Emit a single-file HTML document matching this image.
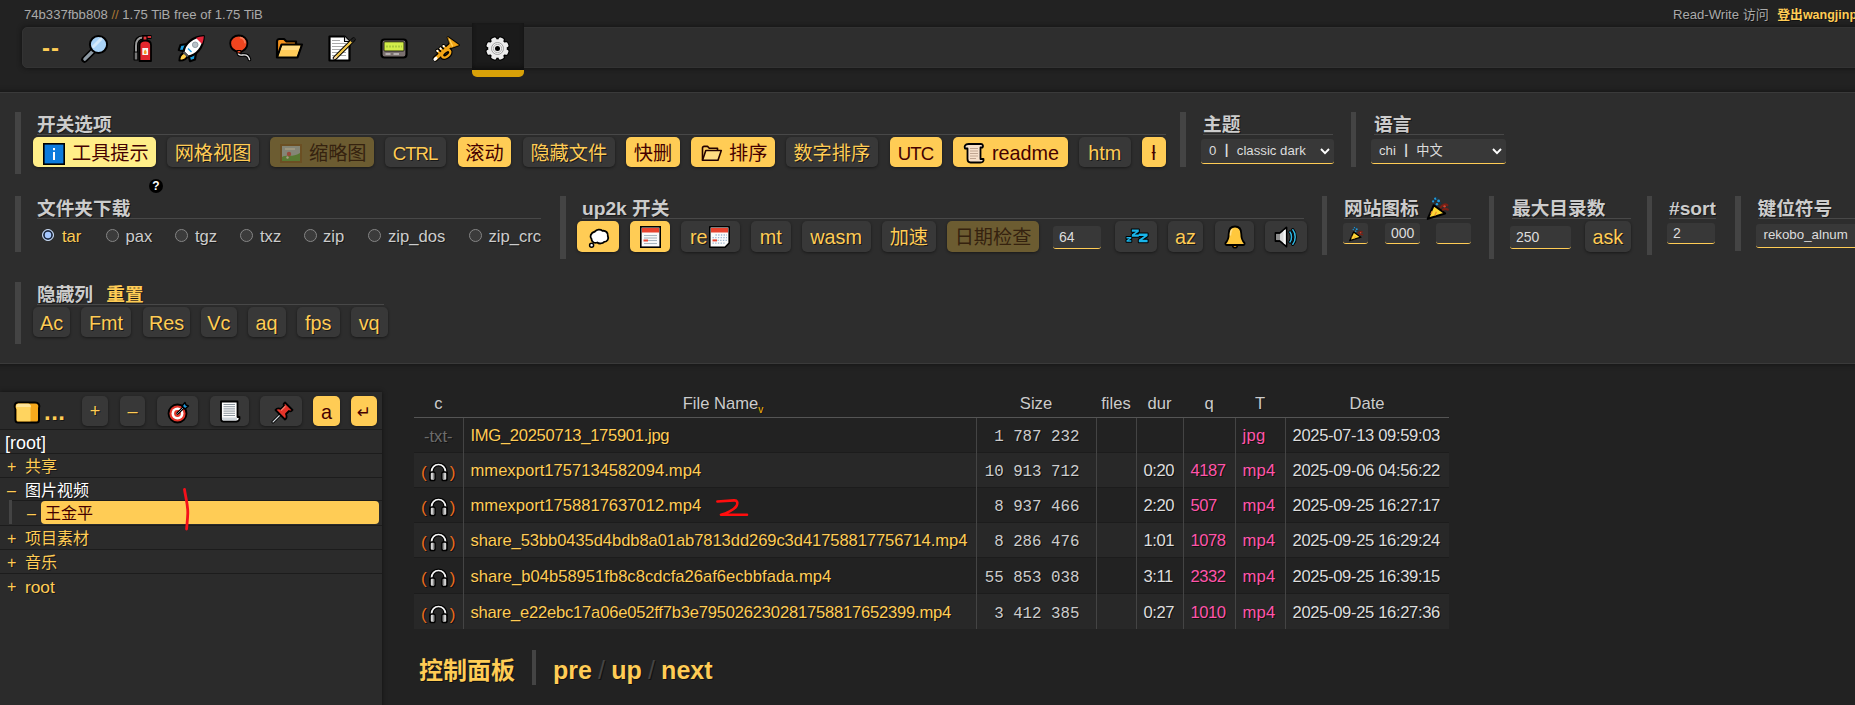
<!DOCTYPE html>
<html lang="zh">
<head>
<meta charset="utf-8">
<title>copyparty</title>
<style>
html,body{margin:0;padding:0}
body{width:1855px;height:705px;overflow:hidden;position:relative;background:#222;color:#ccc;
 font-family:"Liberation Sans","Noto Sans CJK SC",sans-serif;font-size:16px}
.abs,.b,.sec,.h3,.inp,.sel,.rad,.rl,.ico{position:absolute}
a{color:#fc5;text-decoration:none}
/* top */
#srv{left:24px;top:7px;font-size:13.1px;color:#aaa;white-space:nowrap;line-height:16px}
#srv span{color:#a73}
#acc{left:1673px;top:6px;font-size:13.1px;color:#aaa;white-space:nowrap;line-height:17px;text-shadow:1px 1px 0 #111}
#acc .cj{font-size:13px}
#acc a{margin-left:7px;font-weight:normal}
#ops{left:22px;top:27px;width:1900px;height:41px;background:#2e2e2e;border:1px solid #333;border-radius:5px 0 0 5px;box-shadow:0 0 5px #111;box-sizing:border-box}
#gear{left:472px;top:23px;width:52px;height:47px;background:#1b1b1b;border-bottom:7px solid #d8a108;border-radius:0 0 5px 5px;box-shadow:0 -3px 4px #111 inset}
#dash{left:42px;top:36px;font-size:24px;line-height:24px;color:#fc5;font-weight:bold;letter-spacing:1px}
/* config panel */
#cfg{left:-5px;top:92px;width:1900px;height:270px;background:#2d2d2d;border:1px solid #3a3a3a;box-shadow:0 0 5px #111}
.sec{width:5.6px;background:#444;margin-left:-0.8px}
.h3{font-weight:bold;font-size:18.7px;line-height:22px;height:20.3px;margin-top:1.7px;color:#ccc;white-space:nowrap;text-shadow:1px 1px 0 #181818;border-bottom:1px solid #484848}
.h3 .la{font-size:19.2px}
.b{height:30px;line-height:33.5px;border-radius:5px;background:#383838;color:#fc5;text-align:center;font-size:19.2px;white-space:nowrap;
 box-shadow:0 1px 3px rgba(0,0,0,.45);text-shadow:1px 1px 0 #181818}
.b.on{background:#fc5;color:#400;text-shadow:none}
.b.hov{background:#fe8}
.b.on.dim{background:#6c5c31;color:#35220f}.b.dim svg{opacity:.4}
.b .la{font-size:19.8px}
.inp{background:#383838;border-bottom:1px solid #fc5;border-radius:3px;color:#ddd;font-size:14px;box-sizing:border-box;padding-left:6px;white-space:nowrap;overflow:hidden}
.rad{width:11.400px;height:11.400px;border-radius:50%;border:1px solid #858585;background:#3b3b3b;margin-top:-0.700px}
.rad.on{border:1.500px solid #c9d9f0;width:10.400px;height:10.400px;background:#a6c8ff;box-shadow:inset 0 0 0 1.800px #1d2940}
.rl{font-size:16.6px;line-height:20px;margin-top:1px;color:#ccc;text-shadow:1px 1px 0 #181818;white-space:nowrap}
/* tree */
#tree{left:0;top:392px;width:382px;height:320px;background:#2b2b2b;box-shadow:0 0 4px #111}
.tl{position:absolute;left:0;width:382px;height:1px;background:#1c1c1c}
.ti{position:absolute;font-size:16px;line-height:22px;margin-top:1px;white-space:nowrap;color:#fc5;text-shadow:1px 1px 0 #181818}
/* files */
#files{position:absolute;left:414px;top:392px;width:1035px;border-collapse:collapse;table-layout:fixed;font-size:16.6px}
#files th{height:25px;padding:0 0 1px 0;box-sizing:border-box;font-weight:normal;color:#ccc;border-bottom:1px solid #555;text-align:center;vertical-align:middle;text-shadow:1px 1px 0 #181818}
#files td{height:35px;padding:3px 0 0 7px;box-sizing:border-box;border-left:1px solid #444;border-top:1px solid #1c1c1c;white-space:nowrap;overflow:hidden;color:#ddd;text-shadow:1px 1px 0 #111}
#files td:first-child{border-left:none;padding:6px 0 0 0;text-align:center}
#files tr:nth-child(even) td{background:#282828}
#files tr.h36 td{height:36px}
#files td a{color:#fc5}
#files td.sz{font-family:"Liberation Mono",monospace;font-size:15.8px;text-align:right;padding:5px 16px 0 0;color:#ccc}
#files td.pk{color:#f5a}
#files td.du{letter-spacing:-0.45px}#files td.q{letter-spacing:-0.48px}#files td.t{letter-spacing:0.25px}#files td.dt{letter-spacing:-0.347px}
.par{color:#e96d1f;font-size:17px}
#foot{left:419px;top:652.5px;height:36px;line-height:36px;font-weight:bold;white-space:nowrap;color:#fc5;text-shadow:1px 1px 0 #111}
</style>
</head>
<body>
<div id="srv" class="abs">74b337fbb808 <span>//</span> 1.75 TiB free of 1.75 TiB</div>
<div id="acc" class="abs">Read-Write <span class="cj">访问</span> <a style="font-weight:bold;margin-left:5px"><span class="cj" style="font-size:12.8px">登出</span><span style="font-size:12.5px">wangjinping</span></a></div>
<div id="ops" class="abs"></div>
<div id="gear" class="abs"></div>
<div id="dash" class="abs">--</div>
<!-- magnifier -->
<svg class="ico" style="left:80px;top:34px" width="29" height="29" viewBox="0 0 29 29"><path d="M13 17 L4.5 25.5" stroke="#000" stroke-width="6.5" stroke-linecap="round"/><path d="M13 17 L4.8 25.2" stroke="#8d99a3" stroke-width="3.2" stroke-linecap="round"/><circle cx="18.5" cy="10.5" r="8.6" fill="#a9d3f7" stroke="#000" stroke-width="2"/><path d="M13.5 12.5 L21 5" stroke="#d3e9fb" stroke-width="3" stroke-linecap="round"/></svg>
<!-- extinguisher -->
<svg class="ico" style="left:132px;top:34px" width="22" height="29" viewBox="0 0 22 29"><path d="M4 26 V12 C4 6 7 3.5 11 3.5" fill="none" stroke="#000" stroke-width="4.5"/><path d="M4 26 V12 C4 6 7 3.5 11 3.5" fill="none" stroke="#9a9a9a" stroke-width="2"/><rect x="2.2" y="18" width="3.6" height="8" fill="#777" stroke="#000" stroke-width="1"/><path d="M10 3 H19.5" stroke="#000" stroke-width="4"/><path d="M10.5 3 H19" stroke="#e8353b" stroke-width="1.8"/><rect x="11" y="2" width="4" height="5" fill="#e8353b" stroke="#000" stroke-width="1.2"/><path d="M7.5 27 V11 C7.5 8 9.5 6.5 13.2 6.5 C17 6.5 19 8 19 11 V27 Z" fill="#e3262e" stroke="#000" stroke-width="1.8" stroke-linejoin="round"/><rect x="10.3" y="14" width="5.8" height="7" fill="#f4f4f4"/><path d="M13.2 15.5 c1.5 1.5 1.8 3 0.9 4.5 h-1.8 c-0.9-1.5-0.6-3 0.9-4.5z" fill="#f59a23"/></svg>
<!-- rocket -->
<svg class="ico" style="left:177px;top:34px" width="29" height="29" viewBox="0 0 29 29"><g stroke="#000" stroke-width="2.200" stroke-linejoin="round"><path d="M2.500 26.500 C2.500 22 4.500 19.500 8 18.500 L11 21.500 C10 25 7.500 26.500 2.500 26.500Z" fill="#f7931e"/><path d="M10.500 10 L3.500 11 L1.800 16 L8.500 17.500Z" fill="#1ba1e2"/><path d="M19 18.500 L18 25.500 L13 27.200 L11.500 20.500Z" fill="#1ba1e2"/><path d="M6.500 18 C7.500 9.500 15.500 2.500 26.800 2.200 C26.500 13.500 19.500 21.500 11 22.500Z" fill="#fff"/></g><path d="M19 4 C21.500 2.900 24.500 2.300 26.800 2.200 C26.700 4.500 26.200 7.500 25 10Z" fill="#e3263a"/><path d="M3.500 25.600 C3.700 22.500 5.200 20.800 7.500 20 L9.300 21.800 C8.300 24 6.500 25.400 3.500 25.600Z" fill="#ffd34e"/><circle cx="18.200" cy="10.800" r="2.800" fill="#b9c2c8" stroke="#8d979e" stroke-width="0.900"/><path d="M6.500 18 L11 22.500" stroke="#555" stroke-width="2.200"/><path d="M11 14.500 L14.500 18" stroke="#1ba1e2" stroke-width="1.400"/></svg>
<!-- balloon -->
<svg class="ico" style="left:228px;top:34px" width="25" height="29" viewBox="0 0 25 29"><path d="M11 17.500 C9.500 20.500 11.500 21.500 14.500 21 C18 20.400 20.500 21.500 21.500 25.500" fill="none" stroke="#000" stroke-width="3.600" stroke-linecap="round"/><path d="M11 17.500 C9.500 20.500 11.500 21.500 14.500 21 C18 20.400 20.500 21.500 21.500 25.500" fill="none" stroke="#e8e8e8" stroke-width="1.400" stroke-linecap="round"/><path d="M11 18.200 C5.500 17 2.200 13.500 2.200 9.300 C2.200 4.800 6 1.500 10.800 1.500 C15.600 1.500 19.400 4.800 19.400 9.300 C19.400 13.500 16.400 17 11 18.200Z" fill="#f0451f" stroke="#000" stroke-width="1.800"/><path d="M9.300 16.500 L12.700 16.500 L13.200 19 L8.800 19Z" fill="#f0451f" stroke="#000" stroke-width="1.200" stroke-linejoin="round"/><path d="M12.500 3.600 C15 4.200 16.800 6.200 17 8.800" fill="none" stroke="#f77e5b" stroke-width="1.600" stroke-linecap="round"/></svg>
<!-- open folder -->
<svg class="ico" style="left:275px;top:37px" width="29" height="23" viewBox="0 0 29 23"><path d="M2 20.500 V4.500 C2 3 3 2 4.500 2 H9 L11.500 4.500 H21 V8" fill="#f7941d" stroke="#000" stroke-width="2.200" stroke-linejoin="round"/><path d="M2 20.500 L6.500 7.500 H27 L22.500 20.500Z" fill="#ffd262" stroke="#000" stroke-width="2.200" stroke-linejoin="round"/><path d="M7.500 9 H25 L21.500 19 H4Z" fill="#ffcc5a"/><path d="M7.500 9 H25 L23.500 13 H6Z" fill="#ffdc85"/></svg>
<!-- memo -->
<svg class="ico" style="left:327px;top:34px" width="30" height="29" viewBox="0 0 30 29"><path d="M2.500 2.500 H17.500 L22.500 7.500 V26.500 H2.500Z" fill="#fff" stroke="#000" stroke-width="2.200" stroke-linejoin="round"/><path d="M17.500 2.500 V7.500 H22.500" fill="#d9d9d9" stroke="#000" stroke-width="1.100" stroke-linejoin="round"/><g stroke="#a9a9a9" stroke-width="1"><path d="M5 6.500 H13"/><path d="M5 9.500 H19"/><path d="M5 12.500 H19"/><path d="M5 15.500 H19"/><path d="M5 18.500 H19"/><path d="M5 21.500 H19"/><path d="M5 24 H10"/></g><path d="M8 24 L26.500 5.500" stroke="#000" stroke-width="4.200" stroke-linecap="round"/><path d="M8.500 23.500 L25 7" stroke="#f4c84a" stroke-width="2.300" stroke-linecap="round"/><path d="M25 7 L26.800 5.200" stroke="#222" stroke-width="2.600" stroke-linecap="round"/><path d="M7.600 24.400 L9.300 22.700" stroke="#f2d5a8" stroke-width="1.800" stroke-linecap="round"/></svg>
<!-- pager -->
<svg class="ico" style="left:380px;top:38px" width="28" height="21" viewBox="0 0 28 21"><rect x="1.500" y="1.500" width="25" height="18" rx="3" fill="#7a706f" stroke="#000" stroke-width="2.200"/><rect x="4" y="3.800" width="20" height="9.200" rx="0.800" fill="#d2ec4a" stroke="#000" stroke-width="0.800"/><path d="M6 8.500 H22" stroke="#a9c83c" stroke-width="2" stroke-dasharray="2 1"/><path d="M5.500 16 H10.500 M13.500 16 H19" stroke="#c9c5c5" stroke-width="1.600"/></svg>
<!-- trumpet -->
<svg class="ico" style="left:431px;top:34px" width="29" height="29" viewBox="0 0 29 29"><g stroke="#000" stroke-linecap="round" stroke-linejoin="round" fill="none"><path d="M4.500 24.700 L20 11" stroke-width="5.800"/><path d="M17 3.500 L27.500 11 L20.500 13.500 Z" fill="#000" stroke-width="2.600"/><ellipse cx="15.200" cy="19.800" rx="4.800" ry="2.800" transform="rotate(-40 15.200 19.800)" stroke-width="4.800"/><path d="M8.800 19.500 L6.300 16.700 M11.800 17 L9.400 14.400 M14.800 14.600 L12.500 12" stroke-width="4"/></g><g stroke="#f2a516" stroke-linecap="round" stroke-linejoin="round" fill="none"><path d="M4.500 24.700 L20 11" stroke-width="3.300"/><path d="M17 3.500 L27.500 11 L20.500 13.500 Z" fill="#f2a516" stroke-width="0.600"/><ellipse cx="15.200" cy="19.800" rx="4.800" ry="2.800" transform="rotate(-40 15.200 19.800)" stroke-width="2.400"/><path d="M8.800 19.500 L6.300 16.700 M11.800 17 L9.400 14.400 M14.800 14.600 L12.500 12" stroke-width="1.900"/></g><path d="M18.500 5.500 L21.500 12" stroke="#ffd05a" stroke-width="1.400" stroke-linecap="round"/><path d="M6.300 16.700 l0.300 0.300 M9.400 14.400 l0.300 0.300 M12.500 12 l0.300 0.300" stroke="#fff" stroke-width="2" stroke-linecap="round"/><path d="M3.800 25.400 L5.200 24.100" stroke="#fff" stroke-width="2.800" stroke-linecap="round"/></svg>
<!-- gear -->
<svg class="ico" style="left:484px;top:35px" width="27" height="27" viewBox="-13.500 -13.500 27 27"><g fill="#000" stroke="#000" stroke-width="2.200"><circle r="9.300"/><rect x="-2.600" y="-11.300" width="5.200" height="22.600" rx="1.400" transform="rotate(22.5)"/><rect x="-2.600" y="-11.300" width="5.200" height="22.600" rx="1.400" transform="rotate(67.5)"/><rect x="-2.600" y="-11.300" width="5.200" height="22.600" rx="1.400" transform="rotate(112.5)"/><rect x="-2.600" y="-11.300" width="5.200" height="22.600" rx="1.400" transform="rotate(157.5)"/></g><g fill="#ececec"><circle r="9.300"/><rect x="-2.600" y="-11.300" width="5.200" height="22.600" rx="1.400" transform="rotate(22.5)"/><rect x="-2.600" y="-11.300" width="5.200" height="22.600" rx="1.400" transform="rotate(67.5)"/><rect x="-2.600" y="-11.300" width="5.200" height="22.600" rx="1.400" transform="rotate(112.5)"/><rect x="-2.600" y="-11.300" width="5.200" height="22.600" rx="1.400" transform="rotate(157.5)"/></g><circle r="6" fill="#f2f2f2" stroke="#8c8c8c" stroke-width="0.800"/><circle r="4.200" fill="#ececec" stroke="#9a9a9a" stroke-width="0.700"/><circle r="2.500" fill="#000"/></svg>

<div id="cfg" class="abs"></div>
<!-- section bars -->
<div class="sec" style="left:16px;top:112px;height:62px"></div>
<div class="sec" style="left:1181px;top:112px;height:55px"></div>
<div class="sec" style="left:1351.5px;top:112px;height:55px"></div>
<div class="sec" style="left:16px;top:196px;height:56px"></div>
<div class="sec" style="left:561px;top:196px;height:63px"></div>
<div class="sec" style="left:1322.5px;top:196px;height:59px"></div>
<div class="sec" style="left:1489.5px;top:196px;height:63px"></div>
<div class="sec" style="left:1647.5px;top:196px;height:59px"></div>
<div class="sec" style="left:1736px;top:196px;height:55px"></div>
<div class="sec" style="left:16px;top:282px;height:62px"></div>
<!-- headings -->
<div class="h3" style="left:37px;top:112px;width:1129px">开关选项</div>
<div class="h3" style="left:1203px;top:112px;width:130px">主题</div>
<div class="h3" style="left:1374px;top:112px;width:130px">语言</div>
<div class="h3" style="left:37px;top:196px;width:504px">文件夹下载</div>
<div class="h3" style="left:582px;top:196px;width:722px"><span class="la">up2k</span> 开关</div>
<div class="h3" style="left:1344px;top:196px;width:127px">网站图标 <svg class="ico" style="left:80.500px;top:-2px" width="25" height="25" viewBox="0 0 23 23"><g transform="scale(1)"><path d="M2.500 21 L8 8.500 L18.500 16 Z" fill="#fdd835" stroke="#000" stroke-width="1.900" stroke-linejoin="round"/><path d="M6.500 14 L5.500 16.500 M10.500 14.500 L9 18" stroke="#f0932b" stroke-width="1.200"/><g fill="#1e9be0"><circle cx="9.500" cy="2.500" r="1.200"/><circle cx="12.500" cy="4.500" r="1.300"/><circle cx="7.500" cy="5" r="1"/><circle cx="11" cy="7.500" r="1.100"/></g><g fill="#12384f"><circle cx="11" cy="1.800" r="0.900"/><circle cx="14" cy="6.500" r="0.900"/><circle cx="9" cy="4" r="0.800"/></g><path d="M14.500 10.500 C16 8 18.500 7 20.500 8.500 M16.500 12.500 C18 11.500 19.500 11.500 21 12.500" stroke="#7a1f14" stroke-width="2" fill="none" stroke-linecap="round"/><circle cx="18" cy="9.500" r="1.100" fill="#d8432e"/></g></svg></div>
<div class="h3" style="left:1512px;top:196px;width:119px">最大目录数</div>
<div class="h3" style="left:1669px;top:196px;width:47px"><span class="la">#sort</span></div>
<div class="h3" style="left:1757.5px;top:196px;width:110px">键位符号</div>
<div class="h3" style="left:37px;top:282px;width:347px">隐藏列 <a style="margin-left:8px">重置</a></div>
<!-- row 1 buttons -->
<div class="b on hov" style="left:33px;top:137px;width:123px;text-align:left"><svg class="ico" style="left:10px;top:6px" width="22" height="22" viewBox="0 0 22 22"><rect x="0.800" y="0.800" width="20.400" height="20.400" fill="#0c7bdc" stroke="#000" stroke-width="1.600"/><rect x="10" y="9" width="2" height="8" fill="#fff"/><rect x="10" y="5" width="2" height="2.200" fill="#fff"/></svg><span style="margin-left:39px">工具提示</span></div>
<div class="b" style="left:167px;top:137px;width:92px">网格视图</div>
<div class="b on dim" style="left:270px;top:137px;width:104px;text-align:left"><svg class="ico" style="left:10px;top:7px" width="22" height="19" viewBox="0 0 22 19"><rect x="1" y="1" width="20" height="17" fill="#a9c4dd" stroke="#6b3d10" stroke-width="2"/><path d="M2 13 C7 10 12 14 20 9 V17 H2Z" fill="#3fa535"/><circle cx="9" cy="10" r="2.200" fill="#d8324a"/><circle cx="7.500" cy="13.500" r="1.200" fill="#fff"/><path d="M5 5 H15" stroke="#e6eef5" stroke-width="2"/></svg><span style="margin-left:39px">缩略图</span></div>
<div class="b" style="left:385px;top:137px;width:61px"><span class="la" style="font-size:18.6px;letter-spacing:-1px;margin-left:-1px">CTRL</span></div>
<div class="b on" style="left:458px;top:137px;width:53px">滚动</div>
<div class="b" style="left:523px;top:137px;width:91.5px">隐藏文件</div>
<div class="b on" style="left:626px;top:137px;width:54px">快删</div>
<div class="b on" style="left:691px;top:137px;width:84px;text-align:left"><svg class="ico" style="left:9.500px;top:8px" width="22" height="17" viewBox="0 0 22 17"><path d="M1.500 15.200 V3 C1.500 2 2.200 1.400 3.200 1.400 H6.500 L8.300 3.200 H16.500 V5.500" fill="#ffd163" stroke="#200" stroke-width="1.600" stroke-linejoin="round"/><path d="M1.500 15.200 L4.800 5.500 H20.300 L17 15.200Z" fill="#ffdc82" stroke="#200" stroke-width="1.600" stroke-linejoin="round"/></svg><span style="margin-left:38px">排序</span></div>
<div class="b" style="left:785.5px;top:137px;width:92.5px">数字排序</div>
<div class="b on" style="left:890px;top:137px;width:52px"><span class="la" style="font-size:18.6px;letter-spacing:-0.8px;margin-left:-0.8px">UTC</span></div>
<div class="b on" style="left:953px;top:137px;width:115px;text-align:left"><svg class="ico" style="left:10px;top:5px" width="23" height="23" viewBox="0 0 23 23"><path d="M5.500 2 H18 C20 2 20.500 4 19.500 5.500 H17.500 V17 H20.500 C21 19.500 19.500 20.500 17.500 20.500 H7.500 C5.500 20.500 4.500 19 4.500 17 V6.500 H2 C1 4.500 2 2 5.500 2Z" fill="#f6e0cb" stroke="#000" stroke-width="1.800" stroke-linejoin="round"/><g stroke="#b99e8a" stroke-width="0.900"><path d="M7 6.500 H15"/><path d="M7 9 H15"/><path d="M7 11.500 H15"/><path d="M7 14 H15"/><path d="M7 16.500 H13"/></g></svg><span class="la" style="margin-left:39px">readme</span></div>
<div class="b" style="left:1079px;top:137px;width:51.5px"><span class="la">htm</span></div>
<div class="b on" style="left:1141.75px;top:137px;width:24px"><span class="la">ƚ</span></div>
<!-- selects -->
<div class="inp sel" style="left:1200.5px;top:138.5px;width:133px;height:25.5px;line-height:24px;font-size:13.2px;padding-left:8.500px">0 ┃ classic dark<svg class="ico" style="right:4px;top:9px" width="10" height="7" viewBox="0 0 10 7"><path d="M1 1 L5 5.200 L9 1" fill="none" stroke="#fff" stroke-width="1.900"/></svg></div>
<div class="inp sel" style="left:1371px;top:138.5px;width:134.5px;height:25.5px;line-height:24px;font-size:13.2px;padding-left:8px">chi ┃ 中文<svg class="ico" style="right:4px;top:9px" width="10" height="7" viewBox="0 0 10 7"><path d="M1 1 L5 5.200 L9 1" fill="none" stroke="#fff" stroke-width="1.900"/></svg></div>
<!-- tooltip -->
<div class="abs" style="left:149px;top:178.5px;width:14px;height:14px;border-radius:50%;background:#000;color:#fff;font-weight:bold;font-size:12px;line-height:14px;text-align:center">?</div>
<!-- row 2 -->
<div class="rad on" style="left:41.5px;top:229.5px"></div><div class="rl" style="left:62px;top:226px;color:#fc5">tar</div>
<div class="rad" style="left:106px;top:229.5px"></div><div class="rl" style="left:125.5px;top:226px">pax</div>
<div class="rad" style="left:174.5px;top:229.5px"></div><div class="rl" style="left:195px;top:226px">tgz</div>
<div class="rad" style="left:239.5px;top:229.5px"></div><div class="rl" style="left:260px;top:226px">txz</div>
<div class="rad" style="left:303.5px;top:229.5px"></div><div class="rl" style="left:323px;top:226px">zip</div>
<div class="rad" style="left:367.5px;top:229.5px"></div><div class="rl" style="left:388px;top:226px">zip_dos</div>
<div class="rad" style="left:468.5px;top:229.5px"></div><div class="rl" style="left:488.5px;top:226px">zip_crc</div>
<div class="b on" style="left:577px;top:221.3px;height:30.5px;width:42px"><svg class="ico" style="left:10.500px;top:6.500px" width="22" height="21" viewBox="0 0 22 21"><path d="M7 3.500 C8.500 1.300 12.500 1 14.500 2.800 C17.500 2.300 20.500 4.800 19.800 8 C21 10.500 19.500 13.800 16.200 13.800 C14.500 15.800 11 16 9.200 14.500 C6.500 15.500 3.300 13.800 3.500 11 C1.500 9 2.500 4.500 7 3.500Z" fill="#fff" stroke="#000" stroke-width="1.800" stroke-linejoin="round"/><circle cx="3.600" cy="17.200" r="2" fill="#fff" stroke="#000" stroke-width="1.500"/></svg></div>
<div class="b on" style="left:630px;top:221.3px;height:30.5px;width:40px"><svg class="ico" style="left:9.500px;top:5px" width="21" height="22" viewBox="0 0 21 22"><rect x="0.800" y="0.800" width="19.400" height="20.400" fill="#fbfbfb" stroke="#000" stroke-width="1.600"/><rect x="2" y="2" width="17" height="4.500" fill="#e8432e"/><g stroke="#a8b6c0" stroke-width="1.100"><path d="M4 9.500 H17"/><path d="M4 12 H17"/><path d="M8 14.500 H17"/><path d="M4 17.500 H17"/></g><path d="M3.500 14.500 H8" stroke="#e8432e" stroke-width="2"/></svg></div>
<div class="b" style="left:680.5px;top:221.3px;height:30.5px;width:59px;text-align:left"><span class="la" style="margin-left:9.5px">re</span><svg class="ico" style="left:28.500px;top:5px" width="21" height="22" viewBox="0 0 21 22"><path d="M0.800 0.800 H20.200 V17 L16 21.200 H0.800Z" fill="#fbfbfb" stroke="#000" stroke-width="1.600" stroke-linejoin="round"/><rect x="2" y="2" width="17" height="4.500" fill="#e8432e"/><g stroke="#9bb4cf" stroke-width="1.300" stroke-dasharray="1.300 1.400"><path d="M6.500 9 H18"/><path d="M3.500 11.700 H18"/><path d="M8.500 14.400 H18"/><path d="M3.500 17.100 H16"/></g><path d="M3.500 14.400 H8" stroke="#e8432e" stroke-width="2"/></svg></div>
<div class="b" style="left:750.75px;top:221.3px;height:30.5px;width:40px"><span class="la">mt</span></div>
<div class="b" style="left:801.75px;top:221.3px;height:30.5px;width:68.75px"><span class="la">wasm</span></div>
<div class="b" style="left:882px;top:221.3px;height:30.5px;width:53.75px">加速</div>
<div class="b on dim" style="left:947px;top:221.3px;height:30.5px;width:92px">日期检查</div>
<div class="inp" style="left:1053px;top:226px;width:48px;height:23px;line-height:23px">64</div>
<div class="b" style="left:1115px;top:221.3px;height:30.5px;width:41.75px"><svg class="ico" style="left:9.500px;top:7px" width="24" height="16" viewBox="0 0 24 16"><path d="M1.5 9 h4.8 v1.5 l-2.85 1.8 h2.85 v1.5 h-4.8 v-1.5 l2.85 -1.8 h-2.85 Z M6.8 1.5 h7 v2.2 l-4.14 2.8 h4.14 v2.2 h-7 v-2.2 l4.14 -2.8 h-4.14 Z M13.8 5.5 h8.8 v2.6 l-5.42 3.6 h5.42 v2.6 h-8.8 v-2.6 l5.42 -3.6 h-5.42 Z" fill="#19b5ea" stroke="#000" stroke-width="2" stroke-linejoin="round"/><path d="M1.5 9 h4.8 v1.5 l-2.85 1.8 h2.85 v1.5 h-4.8 v-1.5 l2.85 -1.8 h-2.85 Z M6.8 1.5 h7 v2.2 l-4.14 2.8 h4.14 v2.2 h-7 v-2.2 l4.14 -2.8 h-4.14 Z M13.8 5.5 h8.8 v2.6 l-5.42 3.6 h5.42 v2.6 h-8.8 v-2.6 l5.42 -3.6 h-5.42 Z" fill="#19b5ea"/></svg></div>
<div class="b" style="left:1168px;top:221.3px;height:30.5px;width:35px"><span class="la">az</span></div>
<div class="b" style="left:1215px;top:221.3px;height:30.5px;width:38.75px"><svg class="ico" style="left:8.500px;top:4px" width="22" height="24" viewBox="0 0 22 24"><circle cx="11" cy="20.500" r="2.300" fill="#e89b1a" stroke="#000" stroke-width="1.600"/><path d="M11 1.500 C15.500 1.500 17.300 5 17.300 9 C17.300 13.500 18.500 16 20.500 18 C20.800 19.300 20.300 20 19 20 H3 C1.700 20 1.200 19.300 1.500 18 C3.500 16 4.700 13.500 4.700 9 C4.700 5 6.500 1.500 11 1.500Z" fill="#ffc83d" stroke="#000" stroke-width="1.800" stroke-linejoin="round"/><path d="M8 4.500 C6.800 6 6.500 8 6.500 10" stroke="#ffe08a" stroke-width="1.400" fill="none" stroke-linecap="round"/></svg></div>
<div class="b" style="left:1265px;top:221.3px;height:30.5px;width:41.75px"><svg class="ico" style="left:9px;top:5px" width="25" height="22" viewBox="0 0 25 22"><path d="M16 6 C18 8.500 18 13.500 16 16 M18.800 3.800 C22 7.500 22 14.500 18.800 18.200" fill="none" stroke="#000" stroke-width="3.400" stroke-linecap="round"/><path d="M16 6 C18 8.500 18 13.500 16 16 M18.800 3.800 C22 7.500 22 14.500 18.800 18.200" fill="none" stroke="#2fb5e0" stroke-width="1.500" stroke-linecap="round"/><path d="M1.500 7 H6 L12.500 1.500 V20.500 L6 15 H1.500Z" fill="#e6e6e6" stroke="#000" stroke-width="1.800" stroke-linejoin="round"/><path d="M2.400 7.900 H6 V14.100 H2.400Z" fill="#8d8d8d"/><path d="M6 7.900 L11.600 3.300 V18.700 L6 14.100Z" fill="#d9d9d9"/><path d="M9.500 5 L11.600 3.300 V18.700 L9.500 17Z" fill="#f6f6f6"/></svg></div>
<div class="inp" style="left:1343px;top:222.5px;width:24.5px;height:21.5px;padding:0"><svg class="ico" style="left:5px;top:3px" width="16" height="16" viewBox="0 0 16 16"><g transform="scale(0.7)"><path d="M2.500 21 L8 8.500 L18.500 16 Z" fill="#fdd835" stroke="#000" stroke-width="1.900" stroke-linejoin="round"/><path d="M6.500 14 L5.500 16.500 M10.500 14.500 L9 18" stroke="#f0932b" stroke-width="1.200"/><g fill="#1e9be0"><circle cx="9.500" cy="2.500" r="1.200"/><circle cx="12.500" cy="4.500" r="1.300"/><circle cx="7.500" cy="5" r="1"/><circle cx="11" cy="7.500" r="1.100"/></g><g fill="#12384f"><circle cx="11" cy="1.800" r="0.900"/><circle cx="14" cy="6.500" r="0.900"/><circle cx="9" cy="4" r="0.800"/></g><path d="M14.500 10.500 C16 8 18.500 7 20.500 8.500 M16.500 12.500 C18 11.500 19.500 11.500 21 12.500" stroke="#7a1f14" stroke-width="2" fill="none" stroke-linecap="round"/><circle cx="18" cy="9.500" r="1.100" fill="#d8432e"/></g></svg></div>
<div class="inp" style="left:1385px;top:222.5px;width:35px;height:21.5px;line-height:20px">000</div>
<div class="inp" style="left:1435.75px;top:222.5px;width:35px;height:21.5px"></div>
<div class="inp" style="left:1510px;top:226px;width:60.5px;height:23px;line-height:23px;font-size:14px">250</div>
<div class="b" style="left:1585px;top:221.3px;height:30.5px;width:45.75px"><span class="la">ask</span></div>
<div class="inp" style="left:1667px;top:222.5px;width:48px;height:21.5px;line-height:20px">2</div>
<div class="inp sel" style="left:1755.5px;top:223.75px;width:140px;height:24.5px;line-height:22px;font-size:13.3px;padding-left:8px">rekobo_alnum</div>
<!-- row 3 -->
<div class="b" style="left:33px;top:307px;width:37px"><span class="la">Ac</span></div>
<div class="b" style="left:81.25px;top:307px;width:49.5px"><span class="la">Fmt</span></div>
<div class="b" style="left:143px;top:307px;width:47px"><span class="la">Res</span></div>
<div class="b" style="left:200.75px;top:307px;width:36.25px"><span class="la">Vc</span></div>
<div class="b" style="left:247.5px;top:307px;width:38.25px"><span class="la">aq</span></div>
<div class="b" style="left:296.75px;top:307px;width:42.75px"><span class="la">fps</span></div>
<div class="b" style="left:350.75px;top:307px;width:36.75px"><span class="la">vq</span></div>

<div id="tree" class="abs"></div>
<!-- tree header buttons -->
<div class="ti" style="left:44px;top:400px;font-size:24px;font-weight:bold;letter-spacing:0.5px">...</div>
<svg class="ico" style="left:13px;top:401px" width="28" height="23" viewBox="0 0 28 23"><path d="M5 1.500 H22 C25.500 1.500 27 4 26 7 V19 C26 20.500 25 21.500 23.500 21.500 H5 C3.500 21.500 2.500 20.500 2.500 19 V8.500 C0.800 6 1.500 1.500 5 1.500Z" fill="#f5a81c" stroke="#000" stroke-width="2" stroke-linejoin="round"/><path d="M5.200 2.700 H15 C17.500 2.700 18.500 5 17.500 7.500 V20.300 H5.200 C4.200 20.300 3.700 19.800 3.700 19 V8 C2.300 6 2.800 2.700 5.200 2.700Z" fill="#ffd45f"/><path d="M5.200 2.700 H15 C17 2.700 18 4.300 17.700 6 H3.200 C3 4.300 3.800 2.700 5.200 2.700Z" fill="#ffe59a"/></svg>
<div class="b" style="left:82px;top:396.3px;width:26px"><span class="la" style="font-size:18px;position:relative;top:-2px">+</span></div>
<div class="b" style="left:120px;top:396.3px;width:25px"><span class="la" style="font-size:18px;position:relative;top:-2px">–</span></div>
<div class="b" style="left:156.75px;top:396.3px;width:41.25px"><svg class="ico" style="left:10px;top:4.500px" width="23" height="23" viewBox="0 0 23 23"><circle cx="10.500" cy="12.500" r="9" fill="#e3352b" stroke="#000" stroke-width="1.800"/><circle cx="10.500" cy="12.500" r="6" fill="#fff"/><circle cx="10.500" cy="12.500" r="3.400" fill="#e3352b"/><circle cx="10.500" cy="12.500" r="1.300" fill="#fff"/><path d="M10.500 12.500 L16.500 6.500" stroke="#000" stroke-width="2.600" stroke-linecap="round"/><path d="M10.500 12.500 L16.500 6.500" stroke="#8d99a3" stroke-width="1" stroke-linecap="round"/><path d="M15 5 L18 1.500 L19 4 L21.500 5 L18 8Z" fill="#1e9be0" stroke="#000" stroke-width="1.500" stroke-linejoin="round"/></svg></div>
<div class="b" style="left:210px;top:396.3px;width:38.75px"><svg class="ico" style="left:9px;top:4px" width="22" height="23" viewBox="0 0 22 23"><path d="M2 1.500 H18.500 V17 H20.500 C21 19.800 19.500 21.500 17.500 21.500 H4.500 C2.800 21.500 2 20.300 2 18.500Z" fill="#fbfbfb" stroke="#000" stroke-width="1.800" stroke-linejoin="round"/><path d="M3 17.500 H18 C18.500 19 18 20 17 20.600 H4.500 C3.500 20.600 3 19.800 3 18.500Z" fill="#cfd6db"/><g stroke="#7f8a93" stroke-width="0.900"><path d="M4.500 4.500 H16"/><path d="M4.500 6.700 H16"/><path d="M4.500 8.900 H16"/><path d="M4.500 11.100 H16"/><path d="M4.500 13.300 H16"/><path d="M4.500 15.500 H16"/></g></svg></div>
<div class="b" style="left:260px;top:396.3px;width:41.75px"><svg class="ico" style="left:10.500px;top:4.500px" width="24" height="23" viewBox="0 0 24 23"><path d="M2 21 L9.500 13.500" stroke="#000" stroke-width="3" stroke-linecap="round"/><path d="M2 21 L9.500 13.500" stroke="#d5dbe0" stroke-width="1.100" stroke-linecap="round"/><path d="M14 1.500 L21.500 9 C20.500 10.500 19 10.500 18 10 L15 13 C16 15.500 15.500 17.500 14 18.500 L4.500 9 C5.500 7.500 7.500 7 10 8 L13 5 C12.500 4 12.500 2.500 14 1.500Z" fill="#e5342a" stroke="#000" stroke-width="1.800" stroke-linejoin="round"/><path d="M14 5.500 L10.500 9" stroke="#f47c6c" stroke-width="1.300" stroke-linecap="round"/></svg></div>
<div class="b on" style="left:313px;top:396.3px;width:27px"><span class="la">a</span></div>
<div class="b on" style="left:350.75px;top:396.3px;width:26px"><span style="font-family:'DejaVu Sans',sans-serif;font-size:17px;position:relative;top:-1px">↵</span></div>
<div class="tl" style="top:428.5px"></div>
<div class="ti" style="left:5px;top:431px;color:#fff;font-size:18px">[root]</div>
<div class="tl" style="top:453px"></div>
<div class="ti" style="left:7px;top:454.5px">+</div><div class="ti" style="left:25px;top:455px">共享</div>
<div class="tl" style="top:477px"></div>
<div class="ti" style="left:7px;top:478.5px">–</div><div class="ti" style="left:25px;top:479px;color:#fff">图片视频</div>
<div class="abs" style="left:9px;top:500px;width:3px;height:24px;background:#444"></div>
<div class="tl" style="top:500px;left:12px;width:370px"></div>
<div class="abs" style="left:41px;top:501px;width:338px;height:23px;background:#fc5;border-radius:4px"></div>
<div class="ti" style="left:27px;top:502px">–</div><div class="ti" style="left:45px;top:502px;color:#400;text-shadow:none">王金平</div>
<div class="tl" style="top:525px"></div>
<div class="ti" style="left:7px;top:526.5px">+</div><div class="ti" style="left:25px;top:527px">项目素材</div>
<div class="tl" style="top:548.5px"></div>
<div class="ti" style="left:7px;top:550.5px">+</div><div class="ti" style="left:25px;top:551px">音乐</div>
<div class="tl" style="top:572.5px"></div>
<div class="ti" style="left:7px;top:574.5px">+</div><div class="ti" style="left:25px;top:575px;font-size:17.3px">root</div>
<!-- red scribbles -->
<svg class="abs" style="left:170px;top:485px" width="30" height="50" viewBox="0 0 30 50"><path d="M14.5 4.500 C15.5 12 18 20 17.800 28 C17.600 34 17 39 16.600 44" fill="none" stroke="#f5101a" stroke-width="2.800" stroke-linecap="round"/></svg>
<svg class="abs" style="z-index:5;left:712px;top:492px" width="44" height="30" viewBox="0 0 44 30"><path d="M5.400 9.500 L22 8.400 C25.500 8.200 26 11 24.500 14 C22 18 14 21.500 9 22.700 L35 22.800" fill="none" stroke="#ff0d0d" stroke-width="2.600" stroke-linecap="round" stroke-linejoin="round"/></svg>

<table id="files">
<colgroup><col style="width:49px"><col style="width:513px"><col style="width:120px"><col style="width:40px"><col style="width:47px"><col style="width:52px"><col style="width:50px"><col style="width:164px"></colgroup>
<thead><tr><th>c</th><th style="padding-left:7px">File Name<span style="color:#fb0;font-size:10px;position:relative;top:4px">v</span></th><th>Size</th><th>files</th><th>dur</th><th>q</th><th>T</th><th>Date</th></tr></thead>
<tbody>
<tr><td><span style="color:#6c6c6c;position:relative;top:-1px">-txt-</span></td><td><a style="letter-spacing:-0.305px">IMG_20250713_175901.jpg</a></td><td class="sz">1 787 232</td><td></td><td></td><td></td><td class="pk t">jpg</td><td class="dt">2025-07-13 09:59:03</td></tr>
<tr><td><span class="par">(</span><svg style="vertical-align:-4px;margin:0 1px" width="21" height="20" viewBox="0 0 21 20"><path d="M3.500 13 V10 C3.500 5.500 6.500 2.500 10.500 2.500 C14.500 2.500 17.500 5.500 17.500 10 V13" fill="none" stroke="#000" stroke-width="4.200"/><path d="M3.500 13 V10 C3.500 5.500 6.500 2.500 10.500 2.500 C14.500 2.500 17.500 5.500 17.500 10 V13" fill="none" stroke="#f4f4f4" stroke-width="1.700"/><rect x="2" y="10" width="5" height="8.500" rx="1.800" fill="#d6d6d6" stroke="#000" stroke-width="1.600"/><rect x="14" y="10" width="5" height="8.500" rx="1.800" fill="#d6d6d6" stroke="#000" stroke-width="1.600"/><rect x="4.800" y="11" width="1.500" height="6.500" fill="#8d8d8d"/><rect x="14.700" y="11" width="1.500" height="6.500" fill="#8d8d8d"/></svg><span class="par">)</span></td><td><a>mmexport1757134582094.mp4</a></td><td class="sz">10 913 712</td><td></td><td class="du">0:20</td><td class="pk q">4187</td><td class="pk t">mp4</td><td class="dt">2025-09-06 04:56:22</td></tr>
<tr><td><span class="par">(</span><svg style="vertical-align:-4px;margin:0 1px" width="21" height="20" viewBox="0 0 21 20"><path d="M3.500 13 V10 C3.500 5.500 6.500 2.500 10.500 2.500 C14.500 2.500 17.500 5.500 17.500 10 V13" fill="none" stroke="#000" stroke-width="4.200"/><path d="M3.500 13 V10 C3.500 5.500 6.500 2.500 10.500 2.500 C14.500 2.500 17.500 5.500 17.500 10 V13" fill="none" stroke="#f4f4f4" stroke-width="1.700"/><rect x="2" y="10" width="5" height="8.500" rx="1.800" fill="#d6d6d6" stroke="#000" stroke-width="1.600"/><rect x="14" y="10" width="5" height="8.500" rx="1.800" fill="#d6d6d6" stroke="#000" stroke-width="1.600"/><rect x="4.800" y="11" width="1.500" height="6.500" fill="#8d8d8d"/><rect x="14.700" y="11" width="1.500" height="6.500" fill="#8d8d8d"/></svg><span class="par">)</span></td><td><a>mmexport1758817637012.mp4</a></td><td class="sz">8 937 466</td><td></td><td class="du">2:20</td><td class="pk q">507</td><td class="pk t">mp4</td><td class="dt">2025-09-25 16:27:17</td></tr>
<tr><td><span class="par">(</span><svg style="vertical-align:-4px;margin:0 1px" width="21" height="20" viewBox="0 0 21 20"><path d="M3.500 13 V10 C3.500 5.500 6.500 2.500 10.500 2.500 C14.500 2.500 17.500 5.500 17.500 10 V13" fill="none" stroke="#000" stroke-width="4.200"/><path d="M3.500 13 V10 C3.500 5.500 6.500 2.500 10.500 2.500 C14.500 2.500 17.500 5.500 17.500 10 V13" fill="none" stroke="#f4f4f4" stroke-width="1.700"/><rect x="2" y="10" width="5" height="8.500" rx="1.800" fill="#d6d6d6" stroke="#000" stroke-width="1.600"/><rect x="14" y="10" width="5" height="8.500" rx="1.800" fill="#d6d6d6" stroke="#000" stroke-width="1.600"/><rect x="4.800" y="11" width="1.500" height="6.500" fill="#8d8d8d"/><rect x="14.700" y="11" width="1.500" height="6.500" fill="#8d8d8d"/></svg><span class="par">)</span></td><td><a style="letter-spacing:-0.095px">share_53bb0435d4bdb8a01ab7813dd269c3d41758817756714.mp4</a></td><td class="sz">8 286 476</td><td></td><td class="du">1:01</td><td class="pk q">1078</td><td class="pk t">mp4</td><td class="dt">2025-09-25 16:29:24</td></tr>
<tr class="h36"><td><span class="par">(</span><svg style="vertical-align:-4px;margin:0 1px" width="21" height="20" viewBox="0 0 21 20"><path d="M3.500 13 V10 C3.500 5.500 6.500 2.500 10.500 2.500 C14.500 2.500 17.500 5.500 17.500 10 V13" fill="none" stroke="#000" stroke-width="4.200"/><path d="M3.500 13 V10 C3.500 5.500 6.500 2.500 10.500 2.500 C14.500 2.500 17.500 5.500 17.500 10 V13" fill="none" stroke="#f4f4f4" stroke-width="1.700"/><rect x="2" y="10" width="5" height="8.500" rx="1.800" fill="#d6d6d6" stroke="#000" stroke-width="1.600"/><rect x="14" y="10" width="5" height="8.500" rx="1.800" fill="#d6d6d6" stroke="#000" stroke-width="1.600"/><rect x="4.800" y="11" width="1.500" height="6.500" fill="#8d8d8d"/><rect x="14.700" y="11" width="1.500" height="6.500" fill="#8d8d8d"/></svg><span class="par">)</span></td><td><a>share_b04b58951fb8c8cdcfa26af6ecbbfada.mp4</a></td><td class="sz">55 853 038</td><td></td><td class="du">3:11</td><td class="pk q">2332</td><td class="pk t">mp4</td><td class="dt">2025-09-25 16:39:15</td></tr>
<tr class="h36"><td><span class="par">(</span><svg style="vertical-align:-4px;margin:0 1px" width="21" height="20" viewBox="0 0 21 20"><path d="M3.500 13 V10 C3.500 5.500 6.500 2.500 10.500 2.500 C14.500 2.500 17.500 5.500 17.500 10 V13" fill="none" stroke="#000" stroke-width="4.200"/><path d="M3.500 13 V10 C3.500 5.500 6.500 2.500 10.500 2.500 C14.500 2.500 17.500 5.500 17.500 10 V13" fill="none" stroke="#f4f4f4" stroke-width="1.700"/><rect x="2" y="10" width="5" height="8.500" rx="1.800" fill="#d6d6d6" stroke="#000" stroke-width="1.600"/><rect x="14" y="10" width="5" height="8.500" rx="1.800" fill="#d6d6d6" stroke="#000" stroke-width="1.600"/><rect x="4.800" y="11" width="1.500" height="6.500" fill="#8d8d8d"/><rect x="14.700" y="11" width="1.500" height="6.500" fill="#8d8d8d"/></svg><span class="par">)</span></td><td><a style="letter-spacing:-0.215px">share_e22ebc17a06e052ff7b3e795026230281758817652399.mp4</a></td><td class="sz">3 412 385</td><td></td><td class="du">0:27</td><td class="pk q">1010</td><td class="pk t">mp4</td><td class="dt">2025-09-25 16:27:36</td></tr>
</tbody></table>

<div id="foot" class="abs"><span style="font-size:24px">控制面板</span></div>
<div class="abs" style="left:532px;top:650px;width:4px;height:35px;background:#444"></div>
<div class="abs" id="foot2" style="left:553px;top:652px;height:36px;line-height:36px;font-weight:bold;font-size:25px;color:#fc5;white-space:nowrap;text-shadow:1px 1px 0 #111">pre<span style="color:#444;font-weight:normal;margin:0 6.2px">/</span>up<span style="color:#444;font-weight:normal;margin:0 6.2px">/</span>next</div>

</body>
</html>
